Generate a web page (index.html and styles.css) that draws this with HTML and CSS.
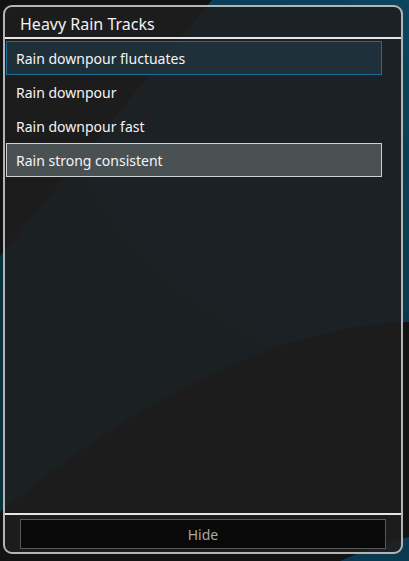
FILE: index.html
```html
<!DOCTYPE html>
<html lang="en">
<head>
<meta charset="utf-8">
<title>Heavy Rain Tracks</title>
<link rel="stylesheet" href="styles.css">
</head>
<body>
<svg class="backdrop" viewBox="0 0 409 561" preserveAspectRatio="none" aria-hidden="true">
  <defs>
    <radialGradient id="glow" cx="409" cy="0" r="520" gradientUnits="userSpaceOnUse">
      <stop offset="0" stop-color="#0d4460"/>
      <stop offset="0.6" stop-color="#0a3a50"/>
      <stop offset="1" stop-color="#08303f"/>
    </radialGradient>
  </defs>
  <rect width="409" height="561" fill="url(#glow)"/>
  <!-- dark wedge in the upper left -->
  <polygon points="0,0 212,0 0,256" fill="#121212"/>
  <!-- dark sweep across the lower half -->
  <path d="M409,322 C300,324 160,380 0,512 L0,561 L409,561 Z" fill="#121212"/>
  <!-- lighter sliver in the bottom right corner -->
  <path d="M340,561 C370,548 395,540 409,537 L409,561 Z" fill="#0a3a50"/>
</svg>

<section class="panel">
  <header class="panel-title">Heavy Rain Tracks</header>
  <ul class="track-list">
    <li class="track is-focused">Rain downpour fluctuates</li>
    <li class="track">Rain downpour</li>
    <li class="track">Rain downpour fast</li>
    <li class="track is-selected">Rain strong consistent</li>
  </ul>
  <footer class="panel-footer">
    <button class="hide-button" type="button">Hide</button>
  </footer>
</section>
</body>
</html>
```
FILE: styles.css
```css
html, body {
  margin: 0;
  padding: 0;
  width: 409px;
  height: 561px;
  overflow: hidden;
  background: #121212;
  font-family: "Noto Sans", "Open Sans", "DejaVu Sans", sans-serif;
}

/* painted wallpaper behind the panel */
.backdrop {
  position: absolute;
  left: 0;
  top: 0;
  width: 409px;
  height: 561px;
  z-index: 0;
}

.panel {
  position: relative;
  z-index: 1;
  margin: 5px 0 0 3px;
  width: 400px;
  height: 549px;
  box-sizing: border-box;
  border: 2px solid #b4b4b4;
  border-radius: 9px;
  background: rgba(30, 30, 30, 0.87);
  display: flex;
  flex-direction: column;
}

.panel-title {
  height: 32px;
  box-sizing: border-box;
  border-bottom: 2px solid #e6e6e6;
  padding: 5px 0 0 15px;
  color: #f2f2f2;
  font-size: 16px;
  line-height: 24px;
}

.track-list {
  list-style: none;
  margin: 2px 0 0 1px;
  padding: 0;
  width: 376px;
  flex: 1;
}

.track {
  height: 34px;
  box-sizing: border-box;
  border: 1px solid transparent;
  padding: 0 0 0 9px;
  color: #f4f4f4;
  font-size: 14px;
  line-height: 33px;
}

.track.is-focused {
  border-color: #1c6d97;
  background: rgba(32, 52, 64, 0.8);
}

.track.is-selected {
  border-color: #d0d0d0;
  background: #4a5153;
}

.panel-footer {
  border-top: 2px solid #e6e6e6;
  padding: 4px 15px 3px 15px;
}

.hide-button {
  display: block;
  width: 100%;
  height: 30px;
  margin: 0;
  box-sizing: border-box;
  border: 1px solid #585858;
  background: #090909;
  color: #a8a8a8;
  font-family: inherit;
  font-size: 14px;
  line-height: 29px;
  padding: 0;
}
```
